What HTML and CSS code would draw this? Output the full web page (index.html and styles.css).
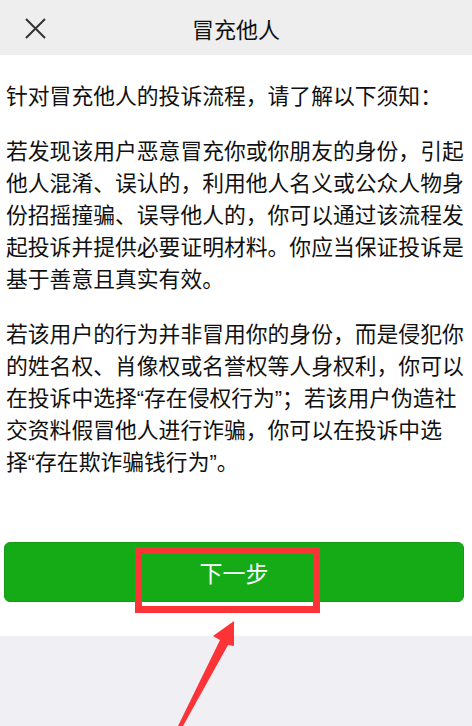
FILE: index.html
```html
<!DOCTYPE html>
<html lang="zh-CN">

<head>
  <meta charset="UTF-8">
  <meta name="viewport" content="width=device-width, initial-scale=1.0">
  <title>冒充他人</title>
  <link rel="stylesheet" href="styles.css">
</head>

<body>
  <div class="page">
    <div class="topbar">
      <span class="close">
        <svg width="21" height="21" viewBox="0 0 21 21">
          <path d="M1 1 L20 20 M20 1 L1 20" stroke="#333" stroke-width="2" fill="none" />
        </svg>
      </span>
      <h1 class="title">冒充他人</h1>
      <span></span>
    </div>

    <div class="content">
      <div class="notice">
        <p>针对冒充他人的投诉流程，请了解以下须知：</p>
        <p>若发现该用户恶意冒充你或你朋友的身份，引起他人混淆、误认的，利用他人名义或公众人物身份招摇撞骗、误导他人的，你可以通过该流程发起投诉并提供必要证明材料。你应当保证投诉是基于善意且真实有效。</p>
        <p>若该用户的行为并非冒用你的身份，而是侵犯你的姓名权、肖像权或名誉权等人身权利，你可以在投诉中选择“存在侵权行为”；若该用户伪造社交资料假冒他人进行诈骗，你可以在投诉中选<br>择“存在欺诈骗钱行为”。</p>
      </div>

      <div class="actions">
        <button type="button" class="button">下一步</button>
        <!-- 标注框 -->
        <div class="mark-box"></div>
      </div>
    </div>

    <!-- 标注箭头 -->
    <svg class="mark-arrow" width="70" height="111" viewBox="0 0 70 111">
      <polygon points="64,6 43,21 50,25 8,111 13,111 58,30 64,31" fill="#fc3438" />
    </svg>
  </div>
</body>

</html>
```

FILE: styles.css
```css
body {
  font-family: 'Liberation Sans', 'Noto Sans CJK SC', sans-serif;
  background-color: #efeff4;
  margin: 0;
  padding: 0;
  color: #111111;
}

.page {
  position: relative;
  min-height: 726px;
  overflow: hidden;
}

.topbar {
  display: grid;
  grid-template-columns: 46px 1fr 46px;
  align-items: center;
  height: 55px;
  background-color: #eeeeee;
}

.close {
  display: flex;
  justify-content: flex-end;
  padding-top: 2px;
}

.title {
  margin: 0;
  font-size: 22px;
  font-weight: normal;
  text-align: center;
  color: #111111;
}

.content {
  background-color: #ffffff;
  padding: 26px 0 34px;
}

.notice {
  padding: 0 4px 0 6px;
}

.notice p {
  margin: 0 0 23px;
  font-size: 21.8px;
  line-height: 32px;
}

.notice p:last-child {
  margin-bottom: 0;
}

.actions {
  position: relative;
  margin-top: 63px;
  padding: 0 8px 0 4px;
}

.button {
  display: block;
  width: 100%;
  height: 60px;
  padding: 0;
  background-color: #14ab16;
  border: 1px solid #139c14;
  border-radius: 6px;
  color: #ffffff;
  font-family: inherit;
  font-size: 23px;
  cursor: pointer;
}

.mark-box {
  position: absolute;
  left: 135px;
  top: 5px;
  width: 171px;
  height: 52px;
  border: 7px solid #fc3438;
}

.mark-arrow {
  position: absolute;
  left: 170px;
  top: 615px;
}
```
